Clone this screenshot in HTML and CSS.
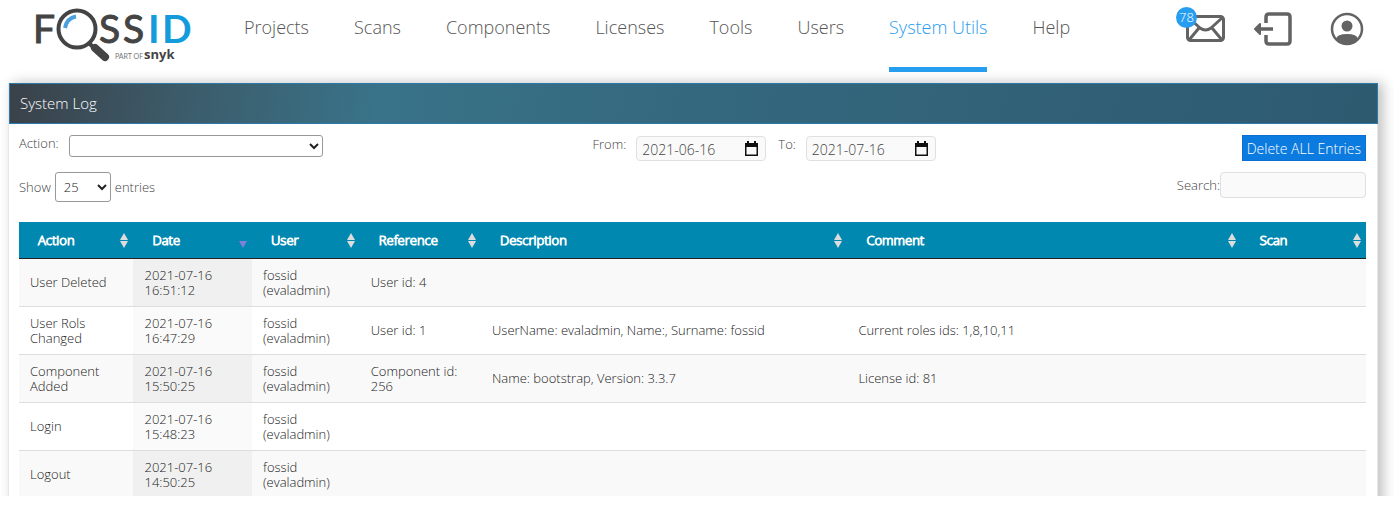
FILE: index.html
```html
<!DOCTYPE html>
<html lang="en">
<head>
<meta charset="utf-8">
<title>System Log</title>
<link rel="stylesheet" href="styles.css">
</head>
<body>
<div class="page">
  <header class="topbar">
    <a class="logo" href="#" aria-label="FOSSID part of snyk">
      <svg width="160" height="60" viewBox="0 0 160 60">
        <text class="logo-dark" x="-1" y="38">F</text>
        <text class="logo-dark" x="65 89" y="38">SS</text>
        <text class="logo-blue" x="114 128" y="38">ID</text>
        <circle cx="43" cy="24" r="18.500" fill="#fff" stroke="#444" stroke-width="4"/>
        <path d="M31 23Q33 13 42 11.500" fill="none" stroke="#4a9fdc" stroke-width="4"/>
        <path d="M55 38l5 5" stroke="#444" stroke-width="4"/>
        <path d="M61 43l10 9" stroke="#444" stroke-width="8" stroke-linecap="round"/>
        <text class="logo-part" x="81" y="54">PART OF</text>
        <text class="logo-snyk" x="110" y="54">snyk</text>
      </svg>
    </a>
    <nav class="nav">
      <a href="#">Projects</a>
      <a href="#">Scans</a>
      <a href="#">Components</a>
      <a href="#">Licenses</a>
      <a href="#">Tools</a>
      <a href="#">Users</a>
      <a class="active" href="#">System Utils</a>
      <a href="#">Help</a>
    </nav>
    <div class="tools">
      <button class="tool mail" type="button" aria-label="Messages">
        <svg width="40" height="28" viewBox="0 0 40 28" fill="none" stroke="#636363" stroke-width="3" stroke-linejoin="round">
          <rect x="1.500" y="1.500" width="36" height="24" rx="3"/>
          <path d="M3 3l11 10q5.500 4 11 0L36 3M3 25l10-12M36 25L26 13"/>
        </svg>
        <span class="badge">78</span>
      </button>
      <button class="tool" type="button" aria-label="Log out">
        <svg width="40" height="34" viewBox="0 0 40 34" fill="none" stroke="#636363" stroke-width="3.500">
          <path d="M13 11V5q0-3 3-3h18q3 0 3 3v24q0 3-3 3H16q-3 0-3-3v-6"/>
          <path d="M4 17h16"/>
          <path d="M7 12L2 17l5 5z" fill="#636363" stroke-width="2" stroke-linejoin="round"/>
        </svg>
      </button>
      <button class="tool" type="button" aria-label="Account">
        <svg width="34" height="34" viewBox="0 0 34 34">
          <circle cx="17" cy="17" r="15" fill="#fff" stroke="#636363" stroke-width="2.500"/>
          <circle cx="17" cy="14" r="5.500" fill="#636363"/>
          <path d="M6 27q1-5 11-5t11 5q-4 5-11 5T6 27z" fill="#636363"/>
        </svg>
      </button>
    </div>
  </header>

  <main class="panel">
    <h1 class="panel-title">System Log</h1>
    <div class="panel-body">
      <div class="filters">
        <div class="field">
          <label for="action">Action:</label>
          <select id="action" class="action-select"><option></option></select>
        </div>
        <div class="dates">
          <div class="field">
            <label for="from">From:</label>
            <span class="date-box">
              <input id="from" type="text" value="2021-06-16">
              <button type="button" aria-label="Pick from date"><svg width="13" height="15" viewBox="0 0 13 15"><path d="M0 2h2V0h2v2h5V0h2v2h2v13H0zM1.500 6v7.500h10V6z" fill="#111" fill-rule="evenodd"/></svg></button>
            </span>
          </div>
          <div class="field">
            <label for="to">To:</label>
            <span class="date-box">
              <input id="to" type="text" value="2021-07-16">
              <button type="button" aria-label="Pick to date"><svg width="13" height="15" viewBox="0 0 13 15"><path d="M0 2h2V0h2v2h5V0h2v2h2v13H0zM1.500 6v7.500h10V6z" fill="#111" fill-rule="evenodd"/></svg></button>
            </span>
          </div>
        </div>
        <button class="delete" type="button">Delete ALL Entries</button>
      </div>
      <div class="controls">
        <div class="length">
          <label for="length">Show</label>
          <select id="length" class="length-select"><option>25</option></select>
          <span>entries</span>
        </div>
        <div class="search">
          <label for="search">Search:</label>
          <input id="search" type="search">
        </div>
      </div>
      <table class="log">
        <colgroup>
          <col class="c-action"><col class="c-date"><col class="c-user"><col class="c-ref"><col class="c-desc"><col class="c-comment"><col class="c-scan">
        </colgroup>
        <thead>
          <tr>
            <th><div class="head">Action<span class="sort"></span></div></th>
            <th><div class="head">Date<span class="sort desc"></span></div></th>
            <th><div class="head">User<span class="sort"></span></div></th>
            <th><div class="head">Reference<span class="sort"></span></div></th>
            <th><div class="head">Description<span class="sort"></span></div></th>
            <th><div class="head">Comment<span class="sort"></span></div></th>
            <th><div class="head">Scan<span class="sort"></span></div></th>
          </tr>
        </thead>
        <tbody>
          <tr><td>User Deleted</td><td>2021-07-16 16:51:12</td><td>fossid (evaladmin)</td><td>User id: 4</td><td></td><td></td><td></td></tr>
          <tr><td>User Rols Changed</td><td>2021-07-16 16:47:29</td><td>fossid (evaladmin)</td><td>User id: 1</td><td>UserName: evaladmin, Name:, Surname: fossid</td><td>Current roles ids: 1,8,10,11</td><td></td></tr>
          <tr><td>Component Added</td><td>2021-07-16 15:50:25</td><td>fossid (evaladmin)</td><td>Component id: 256</td><td>Name: bootstrap, Version: 3.3.7</td><td>License id: 81</td><td></td></tr>
          <tr><td>Login</td><td>2021-07-16 15:48:23</td><td>fossid (evaladmin)</td><td></td><td></td><td></td><td></td></tr>
          <tr><td>Logout</td><td>2021-07-16 14:50:25</td><td>fossid (evaladmin)</td><td></td><td></td><td></td><td></td></tr>
        </tbody>
      </table>
    </div>
  </main>
</div>
</body>
</html>
```

FILE: styles.css
```css
* { box-sizing: border-box; }
body {
  margin: 0;
  background: #fff;
  color: #222;
  font: 300 13px/15px "Open Sans", sans-serif;
}
button, input, select { font: inherit; color: inherit; }
.page { height: calc(100vh - 9px); overflow: hidden; padding: 0 16px 0 8px; }

.topbar { display: flex; align-items: flex-start; height: 83px; padding: 5px 14px 0 26px; }
.logo { flex: none; display: block; margin-right: 50px; }
.logo svg { display: block; }
.logo-dark { font: 400 39px Lato, sans-serif; fill: #444; stroke: #444; stroke-width: 1px; }
.logo-blue { font: 700 39px Lato, sans-serif; fill: #149bdc; }
.logo-part { font: 400 7px Lato, sans-serif; fill: #777; }
.logo-snyk { font: 700 13px "Open Sans", sans-serif; fill: #444; }
.nav { display: flex; gap: 45px; font-size: 18px; line-height: 24px; }
.nav a { color: #555; text-decoration: none; white-space: nowrap; padding: 10px 0 28px; border-bottom: 5px solid transparent; }
.nav a.active { color: #279df0; border-color: #279df0; }
.tools { display: flex; align-items: center; gap: 37px; margin-left: auto; padding-top: 7px; }
.tool { display: block; position: relative; padding: 0; border: 0; background: none; }
.tool svg { display: block; }
.mail { margin-right: -10px; }
.badge {
  position: absolute; left: -10px; top: -8px; width: 21px; height: 21px;
  border-radius: 50%; background: #279df0; color: #fff; font-size: 13px; line-height: 21px; text-align: center;
}

.panel { min-height: 100%; border: 1px solid #e8e8e8; background: #fff; box-shadow: 5px 0 12px rgba(0, 0, 0, .25); }
.panel-title {
  margin: -1px -1px 0 0; padding: 10px; border: 1px solid #2d79aa;
  background: linear-gradient(100deg, #3a4149, #3c5a68 12%, #397389 27%, #34687e 50%, #2e5a70);
  color: #fff; font-size: 15px; font-weight: 300; line-height: 19px;
}
.panel-body { padding: 11px 11px 0 10px; }
.filters { display: grid; grid-template-columns: 4fr auto 3fr; align-items: start; }
.field { display: flex; gap: 10px; }
.field label { padding-top: 1px; color: #444; }
.field select, .length-select { border: 1px solid #999; border-radius: 3px; background: #fff; }
.action-select { width: 254px; height: 22px; }
.dates { display: flex; gap: 12px; padding-top: 1px; }
.date-box { display: flex; align-items: center; width: 130px; height: 25px; padding: 0 7px 0 5px; border: 1px solid #e0e0e0; border-radius: 4px; background: #fafafa; }
.date-box input { flex: 1; min-width: 0; padding: 1px 0 0; border: 0; background: none; color: #444; font-size: 14px; }
.date-box button { padding: 0; border: 0; background: none; }
.date-box svg { display: block; }
.delete { justify-self: end; height: 26px; padding: 0 4px; border: 1px solid #0a6fd0; background: #0b7be0; color: #fff; font-size: 14px; }
.controls { display: flex; justify-content: space-between; align-items: flex-start; padding: 11px 0 20px; }
.length { display: flex; align-items: center; gap: 4px; color: #444; }
.length-select { width: 56px; height: 30px; padding: 0 4px; color: #222; }
.search { display: flex; align-items: center; color: #444; }
.search input { width: 146px; height: 26px; border: 1px solid #e0e0e0; border-radius: 4px; background: #fafafa; }

.log { width: 100%; table-layout: fixed; border-collapse: separate; border-spacing: 0; }
.c-action { width: 8.5%; }
.c-date { width: 8.8%; }
.c-user { width: 8%; }
.c-ref { width: 9%; }
.c-desc { width: 27.2%; }
.c-comment { width: 29.2%; }
.c-scan { width: 9.3%; }
.log th {
  height: 37px; padding: 0 5px 0 19px; border-bottom: 1px solid #222; background: #0088b0;
  color: #fff; font-weight: 300; text-align: left; -webkit-text-stroke: 1px #fff;
}
.head { display: flex; justify-content: space-between; align-items: center; }
.sort { display: grid; gap: 1px; }
.sort::before, .sort::after { content: ""; border: 4px solid transparent; }
.sort::before { border-top: 0; border-bottom: 7px solid #ddd; }
.sort::after { border-bottom: 0; border-top: 7px solid #ddd; }
.sort.desc::before { border-bottom-color: transparent; }
.sort.desc::after { border-top-color: #8080d8; }
.log td { height: 48px; padding: 8px 11px; border-bottom: 1px solid #ddd; vertical-align: middle; }
.log tbody tr:nth-child(odd) td { background: #f9f9f9; }
.log tbody tr td:nth-child(2) { background: #fafafa; }
.log tbody tr:nth-child(odd) td:nth-child(2) { background: #f0f0f0; }
```
